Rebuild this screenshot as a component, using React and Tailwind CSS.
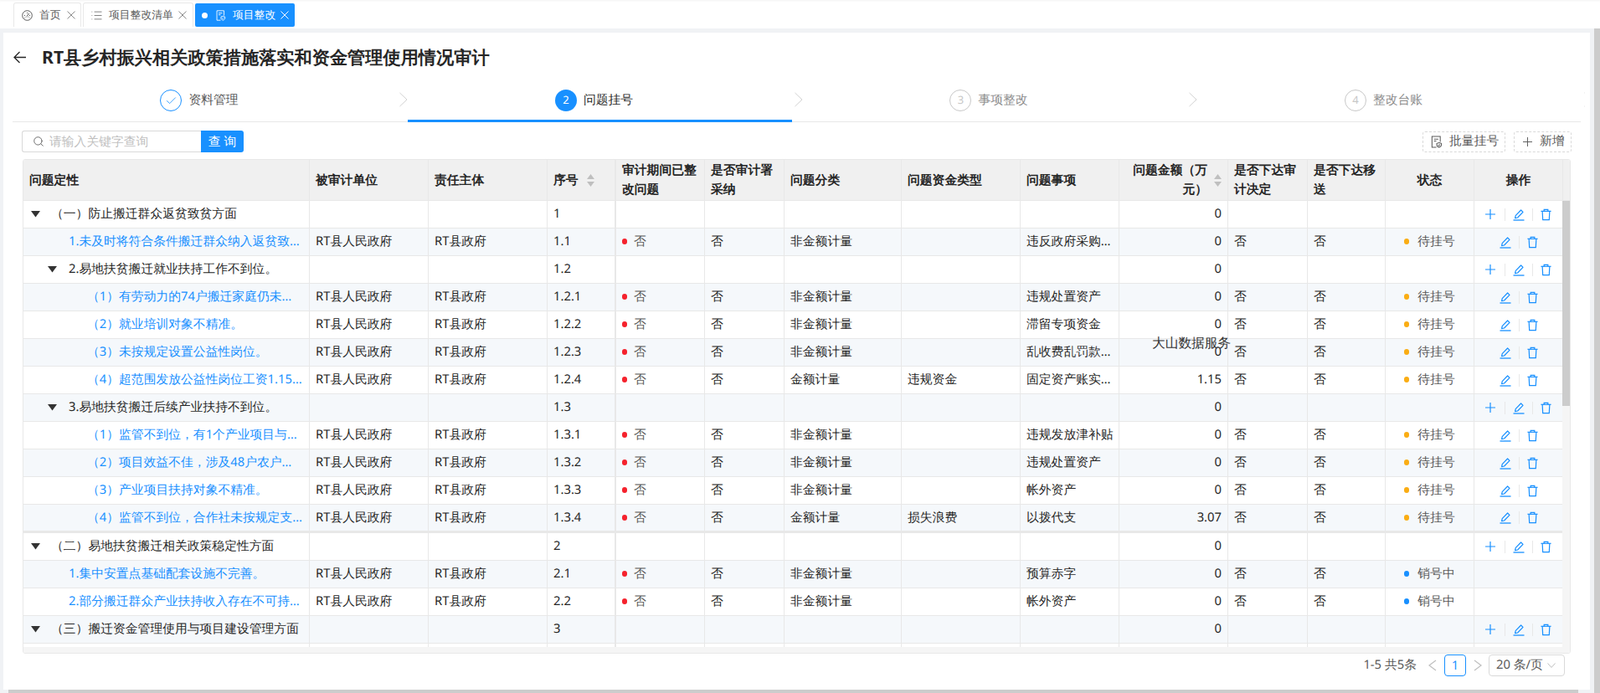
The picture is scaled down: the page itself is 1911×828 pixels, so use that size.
import React from "react";
import { Check, List, Search } from "lucide-react";

const GRID = "grid grid-cols-[342px_142px_142px_82px_106px_95px_140px_142px_118px_130px_95px_93px_106px_106px]";

const rows = [
  { lv: 0, t: "（一）防止搬迁群众返贫致贫方面", no: "1", amt: "0", group: true },
  { lv: 1, t: "1.未及时将符合条件搬迁群众纳入返贫致贫监测范围。", no: "1.1", k: "非金额计量", item: "违反政府采购管理规定", amt: "0" },
  { lv: 1, t: "2.易地扶贫搬迁就业扶持工作不到位。", no: "1.2", amt: "0", group: true },
  { lv: 2, t: "（1）有劳动力的74户搬迁家庭仍未实现就业。", no: "1.2.1", k: "非金额计量", item: "违规处置资产", amt: "0" },
  { lv: 2, t: "（2）就业培训对象不精准。", no: "1.2.2", k: "非金额计量", item: "滞留专项资金", amt: "0" },
  { lv: 2, t: "（3）未按规定设置公益性岗位。", no: "1.2.3", k: "非金额计量", item: "乱收费乱罚款问题", amt: "0" },
  { lv: 2, t: "（4）超范围发放公益性岗位工资1.15万元。", no: "1.2.4", k: "金额计量", fund: "违规资金", item: "固定资产账实不符", amt: "1.15" },
  { lv: 1, t: "3.易地扶贫搬迁后续产业扶持不到位。", no: "1.3", amt: "0", group: true },
  { lv: 2, t: "（1）监管不到位，有1个产业项目与贫困户利益联结不紧密。", no: "1.3.1", k: "非金额计量", item: "违规发放津补贴", amt: "0" },
  { lv: 2, t: "（2）项目效益不佳，涉及48户农户未获得收益。", no: "1.3.2", k: "非金额计量", item: "违规处置资产", amt: "0" },
  { lv: 2, t: "（3）产业项目扶持对象不精准。", no: "1.3.3", k: "非金额计量", item: "帐外资产", amt: "0" },
  { lv: 2, t: "（4）监管不到位，合作社未按规定支付分红资金。", no: "1.3.4", k: "金额计量", fund: "损失浪费", item: "以拨代支", amt: "3.07", thick: true },
  { lv: 0, t: "（二）易地扶贫搬迁相关政策稳定性方面", no: "2", amt: "0", group: true },
  { lv: 1, t: "1.集中安置点基础配套设施不完善。", no: "2.1", k: "非金额计量", item: "预算赤字", amt: "0", off: true },
  { lv: 1, t: "2.部分搬迁群众产业扶持收入存在不可持续风险。", no: "2.2", k: "非金额计量", item: "帐外资产", amt: "0", off: true },
  { lv: 0, t: "（三）搬迁资金管理使用与项目建设管理方面", no: "3", amt: "0", group: true },
  { lv: 0, t: "", no: "", amt: "", blank: true },
];

function DocShield({ className }) {
  return (
    <svg viewBox="0 0 16 16" fill="none" stroke="currentColor" strokeWidth="1.1" className={className}>
      <path d="M8 15H2.5V1h10.5v7" />
      <path d="M5 4.5h5.5M5 7h3" />
      <path d="M11.5 9l2.9 1v2.2c0 1.3-1.3 2.1-2.9 2.8-1.6-.7-2.9-1.5-2.9-2.8V10z" />
      <path d="M10.3 12l.9.9 1.5-1.5" />
    </svg>
  );
}

function GaugeIcon() {
  return (
    <svg viewBox="0 0 13 13" fill="none" stroke="#595959" strokeWidth="1" className="w-[13px] h-[13px] shrink-0">
      <circle cx="6.5" cy="6.5" r="5.8" />
      <path d="M3.2 9.5a4.2 4.2 0 0 1 6.6 0" strokeDasharray="1 1" />
      <path d="M6.3 7.2L8.6 4M3 6.5h1M10 6.5H9M6.5 3v1" />
    </svg>
  );
}

function XIcon({ className = "" }) {
  return (
    <svg viewBox="0 0 10 10" fill="none" stroke="currentColor" strokeWidth="1" className={`w-[10px] h-[10px] shrink-0 ${className}`}>
      <path d="M0.5 0.5l9 9M9.5 0.5l-9 9" />
    </svg>
  );
}

function PlusIcon({ className = "", color = "currentColor", w = 1.2 }) {
  return (
    <svg viewBox="0 0 14 14" fill="none" stroke={color} strokeWidth={w} className={`shrink-0 ${className}`}>
      <path d="M7 0v14M0 7h14" />
    </svg>
  );
}

function Edit() {
  return (
    <svg viewBox="0 0 14 15" fill="none" stroke="#1890ff" strokeWidth="1.2" className="w-[14px] h-[15px] shrink-0">
      <path d="M0.5 14h13" strokeWidth="1.3" />
      <path d="M2.6 11.6l.6-3L9.6 2l2.4 2.4-6.4 6.6z" strokeLinejoin="round" />
    </svg>
  );
}

function Trash() {
  return (
    <svg viewBox="0 0 14 15" fill="none" stroke="#1890ff" strokeWidth="1.3" className="w-[13px] h-[15px] shrink-0">
      <path d="M0.5 3h13" />
      <path d="M4.5 3V1h5v2" />
      <path d="M2.3 3l.6 11h8.2l.6-11" />
    </svg>
  );
}

function Sep() {
  return <span className="w-px h-[15px] bg-[#e8e8e8] shrink-0" />;
}

function Sort() {
  return (
    <svg viewBox="0 0 9 15" className="w-[9px] h-[15px] shrink-0" fill="#bfbfbf">
      <path d="M4.5 0L9 6H0z" />
      <path d="M4.5 15L0 9h9z" />
    </svg>
  );
}

function Caret() {
  return (
    <svg viewBox="0 0 11 8" className="w-[11px] h-[8px] shrink-0" fill="#333">
      <path d="M0 0h11L5.5 7.5z" />
    </svg>
  );
}

function Th({ children, className = "" }) {
  return (
    <div className={`flex items-center pl-[7px] pr-[7px] border-r border-[#e8e8e8] leading-[23px] font-semibold text-[#262626] ${className}`}>
      {children}
    </div>
  );
}

function Td({ children, className = "" }) {
  return (
    <div className={`flex items-center pr-[7px] pb-px min-w-0 border-r border-[#e8e8e8] whitespace-nowrap overflow-hidden ${className}`}>
      {children}
    </div>
  );
}

function Row({ r, i }) {
  const leaf = !r.group && !r.blank;
  const bg = i % 2 === 1 ? "bg-[#f5f8fb]" : "bg-white";
  const h = r.thick ? "h-[34px] border-b-[3px]" : "h-[33px] border-b";
  const pad = r.group
    ? r.lv === 0 ? "pl-[9px]" : "pl-[29px]"
    : r.lv === 1 ? "pl-[54px]" : "pl-[76px]";
  return (
    <div className={`${GRID} ${bg} ${h} border-[#e8e8e8] text-[#262626]`}>
      <Td className={`${pad} ${r.group ? "" : "text-[#1890ff]"}`}>
        {r.group && <Caret />}
        {r.group && <span className={r.lv === 0 ? "w-[13px] shrink-0" : "w-[14px] shrink-0"} />}
        <span className="truncate">{r.t}</span>
      </Td>
      <Td className="pl-[7px]">{leaf && "RT县人民政府"}</Td>
      <Td className="pl-[7px]">{leaf && "RT县政府"}</Td>
      <Td className="pl-[7px] border-r-2">{r.no}</Td>
      <Td className="pl-[7px]">
        {leaf && (
          <>
            <span className="w-[6px] h-[7px] rounded-full bg-[#f5222d] mr-[8px] shrink-0" />
            <span className="text-[#595959]">否</span>
          </>
        )}
      </Td>
      <Td className="pl-[7px]">{leaf && "否"}</Td>
      <Td className="pl-[7px]">{r.k}</Td>
      <Td className="pl-[7px]">{r.fund}</Td>
      <Td className="pl-[7px] !pr-[6px]"><span className="truncate">{r.item}</span></Td>
      <Td className="pl-[7px] justify-end">{r.amt}</Td>
      <Td className="pl-[7px]">{leaf && "否"}</Td>
      <Td className="pl-[7px]">{leaf && "否"}</Td>
      <Td className="pl-[7px] justify-center">
        {leaf && (
          <>
            <span className={`w-[6px] h-[7px] rounded-full mr-[10px] shrink-0 ${r.off ? "bg-[#1890ff]" : "bg-[#faad14]"}`} />
            <span className="text-[#595959]">{r.off ? "销号中" : "待挂号"}</span>
          </>
        )}
      </Td>
      <Td className="pl-[7px] !pb-0 justify-center gap-[9px]">
        {r.group && (
          <>
            <PlusIcon color="#1890ff" w={1.4} className="w-[12px] h-[12px] mr-[2px]" />
            <Sep />
          </>
        )}
        {!r.blank && !r.off && (
          <>
            <Edit />
            <Sep />
            <Trash />
          </>
        )}
      </Td>
    </div>
  );
}

function Step({ n, label, state }) {
  const active = state === "active";
  return (
    <div className="flex shrink-0 items-center w-[471.5px] h-[49px]">
      <div className={`w-[459px] shrink-0 h-[49px] flex items-center justify-center gap-[8px] pr-[13px] ${active ? "border-b-[3px] border-[#1890ff]" : "pb-[3px]"}`}>
        {state === "done" && (
          <span className="w-[26px] h-[26px] rounded-full border border-[#1890ff] flex items-center justify-center">
            <Check size={15} color="#1890ff" strokeWidth={1.3} />
          </span>
        )}
        {active && (
          <span className="w-[26px] h-[26px] rounded-full bg-[#1890ff] text-white text-[13px] flex items-center justify-center">{n}</span>
        )}
        {state === "todo" && (
          <span className="w-[26px] h-[26px] rounded-full border border-[#c8c8c8] text-[#c8c8c8] text-[13px] flex items-center justify-center">{n}</span>
        )}
        <span className={`pb-px ${state === "done" ? "text-[#595959]" : active ? "text-[#262626]" : "text-[#8c8c8c]"}`}>{label}</span>
      </div>
      <svg viewBox="0 0 10 18" fill="none" stroke="#d0d0d0" className="ml-[3px] w-[9.5px] h-[18px] shrink-0 -mt-[6px]">
        <path d="M0.5 0.5L9.5 9L0.5 17.5" />
      </svg>
    </div>
  );
}

export default function App() {
  return (
    <div className="w-[1911px] h-[828px] overflow-hidden bg-[#f0f2f5] text-[14.8px] [text-rendering:geometricPrecision] [text-spacing-trim:space-all] font-['Noto_Sans','Noto_Sans_CJK_SC',sans-serif]">
      <div className="h-[34px] bg-white flex items-start pl-4 pt-[3px] gap-[2px] shadow-[inset_0_3px_3px_-2px_rgba(0,0,0,0.05)] text-[12.8px]">
        <div className="w-[81px] h-[29px] flex items-center border border-b-0 border-[#e8e8e8] rounded-t-[3px] pl-[9px] text-[#595959]">
          <GaugeIcon />
          <span className="ml-[8px]">首页</span>
          <XIcon className="ml-[7px] text-[#8c8c8c]" />
        </div>
        <div className="w-[132px] h-[29px] flex items-center border border-b-0 border-[#e8e8e8] rounded-t-[3px] pl-[8px] text-[#595959]">
          <List size={15} strokeWidth={1.2} className="shrink-0" />
          <span className="ml-[7px]">项目整改清单</span>
          <XIcon className="ml-[6px] text-[#8c8c8c]" />
        </div>
        <div className="w-[119px] h-[28px] mt-px flex items-center bg-[#1890ff] rounded-[2px] pl-2 text-white">
          <span className="w-[7px] h-[7px] rounded-full bg-white shrink-0" />
          <DocShield className="w-[13px] h-[13px] ml-[9px] shrink-0" />
          <span className="ml-[8px]">项目整改</span>
          <XIcon className="ml-[6px]" />
        </div>
      </div>

      <div className="flex h-[794px]">
        <div className="w-[1904px] shrink-0">
          <div className="ml-1 mt-[5px] w-[1895px] h-[785px] bg-white overflow-hidden">
            <div className="h-[58px] flex items-center pl-[7px] pt-px gap-[13px]">
              <svg viewBox="0 0 15 15" fill="none" stroke="#262626" strokeWidth="1.3" className="w-[15px] h-[15px] ml-[5px] mr-[6px] shrink-0">
                <path d="M15 7.5H1M7.5 1L1 7.5L7.5 14" />
              </svg>
              <h1 className="text-[21.2px] font-bold text-[#262626]">RT县乡村振兴相关政策措施落实和资金管理使用情况审计</h1>
            </div>

            <div className="ml-[11px] w-[1873px] h-[49px] border-b border-[#e8e8e8]">
              <div className="flex w-[1878px] h-[49px] overflow-hidden">
                <Step label="资料管理" state="done" />
                <Step n="2" label="问题挂号" state="active" />
                <Step n="3" label="事项整改" state="todo" />
                <Step n="4" label="整改台账" state="todo" />
              </div>
            </div>

            <div className="mt-[10px] ml-[22px] w-[1851px] h-[26px] flex items-center justify-between">
              <div className="flex h-[26px]">
                <div className="w-[214px] flex items-center border border-[#d9d9d9] border-r-0 rounded-l-[3px] pl-3">
                  <Search size={14} strokeWidth={1.5} className="text-[#595959]" />
                  <span className="ml-[6px] text-[#bfbfbf]">请输入关键字查询</span>
                </div>
                <div className="w-[51px] flex items-center justify-center bg-[#1890ff] text-white font-medium rounded-r-[3px]">查 询</div>
              </div>
              <div className="flex gap-[10px] h-[25px] text-[#595959]">
                <div className="w-[99px] flex items-center border border-dashed border-[#d9d9d9] rounded-[3px] pl-2">
                  <DocShield className="w-[15px] h-[15px] shrink-0" />
                  <span className="ml-[8px] pb-px">批量挂号</span>
                </div>
                <div className="w-[69px] flex items-center border border-dashed border-[#d9d9d9] rounded-[3px] pl-[10px]">
                  <PlusIcon className="w-[11px] h-[11px]" w={1.2} />
                  <span className="ml-[9px] pb-px">新增</span>
                </div>
              </div>
            </div>

            <div className="relative mt-2 ml-[23px] w-[1849px] h-[591px] border border-[#e8e8e8] rounded-[3px] overflow-hidden">
              <div className="flex h-[49px] bg-[#f0f0f0] border-b border-[#e8e8e8]">
                <div className={`${GRID} shrink-0`}>
                  <Th>问题定性</Th>
                  <Th>被审计单位</Th>
                  <Th>责任主体</Th>
                  <Th className="border-r-2 gap-[10px]">序号<Sort /></Th>
                  <Th>审计期间已整改问题</Th>
                  <Th>是否审计署采纳</Th>
                  <Th>问题分类</Th>
                  <Th>问题资金类型</Th>
                  <Th>问题事项</Th>
                  <Th className="gap-[8px]"><span className="text-right">问题金额（万元）</span><Sort /></Th>
                  <Th>是否下达审计决定</Th>
                  <Th>是否下达移送</Th>
                  <Th className="justify-center">状态</Th>
                  <Th className="justify-center">操作</Th>
                </div>
              </div>
              <div className="flex h-[533px]">
                <div className="w-[1838px] shrink-0 overflow-hidden">
                  {rows.map((r, i) => (
                    <Row key={i} r={r} i={i} />
                  ))}
                </div>
                <div className="w-[9px] shrink-0 bg-[#f5f5f5]">
                  <div className="h-[245px] bg-[#cccccc]" />
                </div>
              </div>
              <div className="h-[8px] bg-[#f5f5f5]" />
              <div className="absolute left-[1348px] top-[207px] text-[15.7px] text-[#333] whitespace-nowrap">大山数据服务</div>
            </div>

            <div className="mt-px mr-[30px] h-[26px] flex items-center justify-end text-[#595959]">
              <span className="pb-px">1-5 共5条</span>
              <svg viewBox="0 0 16 14" fill="none" stroke="#bfbfbf" strokeWidth="1.2" className="ml-[11px] w-[16px] h-[14px] shrink-0">
                <path d="M12 1L4 7l8 6" />
              </svg>
              <span className="ml-[6px] w-[26px] h-[26px] flex items-center justify-center border border-[#1890ff] rounded-[4px] text-[#1890ff]">1</span>
              <svg viewBox="0 0 16 14" fill="none" stroke="#bfbfbf" strokeWidth="1.2" className="ml-[6px] w-[16px] h-[14px] shrink-0">
                <path d="M4 1l8 6-8 6" />
              </svg>
              <div className="ml-[5px] w-[91px] h-[26px] flex items-center border border-[#d9d9d9] rounded-[4px] pl-2">
                <span className="pb-px">20 条/页</span>
                <svg viewBox="0 0 10 6" fill="none" stroke="#bfbfbf" strokeWidth="1" className="ml-[5px] w-[10px] h-[6px] shrink-0">
                  <path d="M0.5 0.5L5 5.5L9.5 0.5" />
                </svg>
              </div>
            </div>
          </div>
          <div className="pl-[10px] w-[1885px]">
            <div className="h-1 bg-[#cccccc]" />
          </div>
        </div>
        <div className="w-[7px] bg-[#cccccc]" />
      </div>
    </div>
  );
}
